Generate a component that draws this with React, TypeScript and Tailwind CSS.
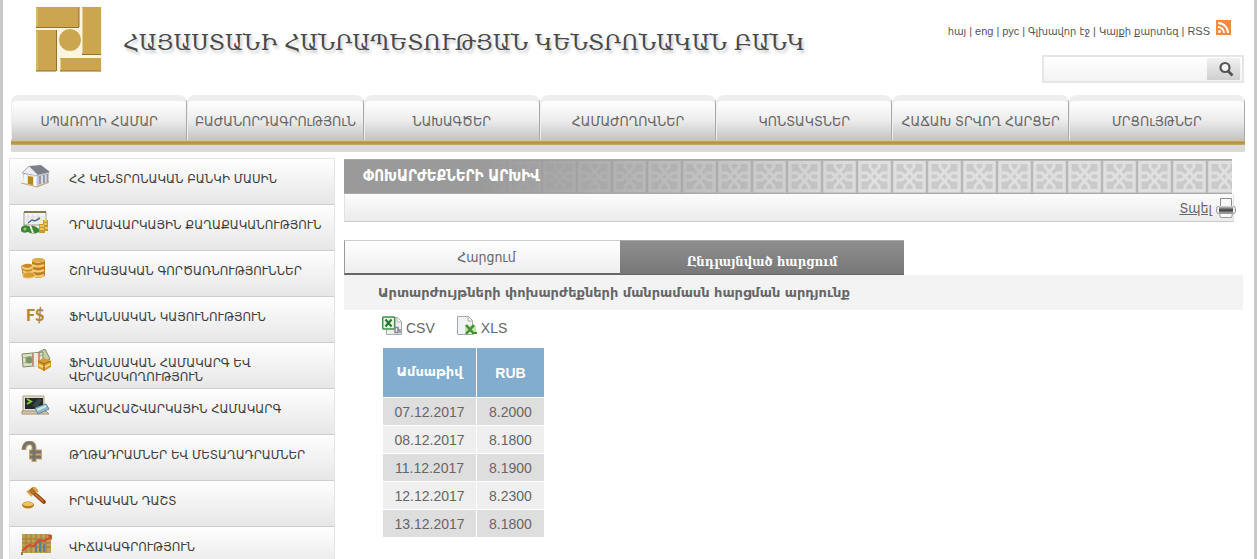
import { FC, ReactNode } from "react";

interface MenuItem {
  label: string;
  icon: ReactNode;
}

const navLinks = [
  "ՍՊԱՌՈՂԻ ՀԱՄԱՐ",
  "ԲԱԺԱՆՈՐԴԱԳՐՈւԹՅՈւՆ",
  "ՆԱԽԱԳԾԵՐ",
  "ՀԱՄԱԺՈՂՈՎՆԵՐ",
  "ԿՈՆՏԱԿՏՆԵՐ",
  "ՀԱՃԱԽ ՏՐՎՈՂ ՀԱՐՑԵՐ",
  "ՄՐՑՈւՅԹՆԵՐ",
];

const topLinks = ["հայ", "eng", "рус", "Գլխավոր էջ", "Կայքի քարտեզ", "RSS"];

const rates = [
  { date: "07.12.2017", value: "8.2000" },
  { date: "08.12.2017", value: "8.1800" },
  { date: "11.12.2017", value: "8.1900" },
  { date: "12.12.2017", value: "8.2300" },
  { date: "13.12.2017", value: "8.1800" },
];

const Logo = () => (
  <svg width="66" height="65" viewBox="0 0 66 65" className="shrink-0">
    <rect width="66" height="65" fill="#fbf4df" />
    <path d="M1 0h42v20H0V0zM46 0h19v47H46zM0 23h20v41H0zM24 51h41v13H24z" fill="#cba64f" />
    <path d="M0 20.500h43M46 47.500h19M24 64h41M0 64h20M20.500 23v41M43 0v20" stroke="#97712a" fill="none" />
    <path d="M1 1v18M1 24v39M46.500 1v45M24.500 52v11" stroke="#e6cc8a" fill="none" />
    <circle cx="34" cy="33" r="11.500" fill="#cba64f" stroke="#fffaf0" />
  </svg>
);

const RssIcon = () => (
  <svg width="15" height="15" viewBox="0 0 15 15">
    <rect width="15" height="15" fill="#f08a3c" />
    <circle cx="3.500" cy="11.500" r="1.500" fill="#fff" />
    <path d="M2 7a6 6 0 0 1 6 6M2 3a10 10 0 0 1 10 10" fill="none" stroke="#fff" strokeWidth="1.800" />
  </svg>
);

const SearchIcon = () => (
  <svg width="16" height="16" viewBox="0 0 16 16">
    <circle cx="7" cy="6.500" r="4.500" fill="#f4f4f4" stroke="#555" strokeWidth="2.200" />
    <path d="M10 10l4.500 4.500" stroke="#555" strokeWidth="2.800" />
  </svg>
);

const BankIcon = () => (
  <svg width="32" height="24" viewBox="0 0 32 24">
    <path d="M2 9l6-7 12-1 8 6v11l-12 4-13-4z" fill="#c3c6cd" />
    <path d="M8 1l12-1 9 7-13 3z" fill="#7c8088" />
    <path d="M1 8l7-7 9 9-1 1z" fill="#eceef1" stroke="#a4a8b0" />
    <path d="M3 9l13 2v10L3 18z" fill="#dfe2e8" />
    <path d="M4.500 10v8M14 12v9" stroke="#fff" strokeWidth="2" />
    <path d="M7 11l5 1v8l-5-1z" fill="#b88422" />
    <path d="M19 11v8M23 10v8M26 9v8" stroke="#858c9b" strokeWidth="1.500" />
    <path d="M21 11v8M25 10v7" stroke="#eceef1" />
    <path d="M0 18l16 4 12-5" fill="none" stroke="#cda871" />
  </svg>
);

const BoardIcon = () => (
  <svg width="32" height="24" viewBox="0 0 32 24">
    <path d="M3 1h22v13H3z" fill="#f3f4f2" stroke="#9b9a8c" />
    <path d="M3 1h22" stroke="#807c54" strokeWidth="2" />
    <path d="M7 3v10M12 3v10M17 3v10M3 6h22M3 9h22" stroke="#d9dedb" />
    <path d="M7 12l4-3 3 1 5-3" fill="none" stroke="#4e6d93" strokeWidth="1.500" />
    <path d="M0 17q2-4 7-2 6-2 11 3v3q-6 3-11 0-5 2-7-1z" fill="#3c8735" />
    <circle cx="4" cy="18" r="1.500" fill="#95c974" />
    <path d="M9 14l3 8" stroke="#e8ecd6" strokeWidth="2" />
    <path d="M18 13h6v9h-6zM22 9h5v11h-5z" fill="#c79a2b" />
    <path d="M19 15h4M19 18h4M23 10h3M23 13h3M24 17h3" stroke="#f2d66c" strokeWidth="1.500" />
  </svg>
);

const CoinsIcon = () => (
  <svg width="32" height="24" viewBox="0 0 32 24">
    <path d="M11 3q7-4 13 0v16q-7 4-13 0z" fill="#bd7f25" />
    <path d="M0 9q6-4 12-1v11q-6 4-10 1z" fill="#c78a2a" />
    <path d="M11 3q6 4 13 0M11 8q6 3 12 0M11 13q6 3 12 0M11 18q6 3 12 0M1 10q5 4 11 0M2 14q5 4 10 0" stroke="#f3cf72" fill="none" strokeWidth="2" />
    <ellipse cx="17.500" cy="3" rx="6" ry="2" fill="#dfac49" />
    <ellipse cx="8" cy="18" rx="6" ry="3" fill="#d89c36" stroke="#ebc76b" />
  </svg>
);

const StabilityIcon = () => (
  <svg width="32" height="24" viewBox="0 0 32 24">
    <text x="5" y="18" className="font-['Lato'] text-[16px] font-black" fill="#b58735">
      F$
    </text>
  </svg>
);

const CashIcon = () => (
  <svg width="32" height="24" viewBox="0 0 32 24">
    <path d="M12 6l12-6 5 10-12 6z" fill="#c4cfaa" stroke="#7b8964" />
    <path d="M1 5l21-2v13L2 18z" fill="#dce0c4" stroke="#7d8c66" />
    <path d="M1 9l21-3M2 14l20-2" stroke="#a3ad85" />
    <circle cx="8" cy="11" r="3.500" fill="#7f956d" />
    <path d="M12 4h6v13h-6z" fill="#eee9df" />
    <path d="M12 4v13M18 4v13" stroke="#c87464" strokeWidth="1.500" />
    <path d="M17 12l6-3 7 3v6l-7 4-6-3z" fill="#d59c2e" />
    <path d="M17 12l6 3 7-3M23 15v7" stroke="#9c6519" fill="none" />
    <path d="M18 16l4 2M24 18l5-3" stroke="#f6d77b" strokeWidth="2" />
  </svg>
);

const TerminalIcon = () => (
  <svg width="32" height="24" viewBox="0 0 32 24">
    <path d="M2 1h21v16H2z" fill="#e4ded0" stroke="#b69e75" />
    <path d="M4 3h18v11H4z" fill="#222b2c" />
    <path d="M6 4l4 2.500L6 9" fill="none" stroke="#8dc63f" strokeWidth="2" />
    <path d="M11 11l6-7 4 1-4 7z" fill="#3c474a" />
    <path d="M1 16h24l3 3H1z" fill="#cfc8b8" stroke="#a98e68" />
    <path d="M14 13l11-4 3 5-11 5z" fill="#91b9cf" stroke="#5686a5" />
    <path d="M16 15l9-4" stroke="#d3e9d0" strokeWidth="2" />
  </svg>
);

const DramIcon = () => (
  <svg width="32" height="24" viewBox="0 0 32 24">
    <path d="M3 9C3 0 13 0 13 6v15M8 11h13M8 16h13" fill="none" stroke="#c5a66d" strokeWidth="5" />
    <path d="M2.500 8.500C3 0 13 0 13 6v14M9 11h11M9 16h11" fill="none" stroke="#77736b" strokeWidth="3" />
  </svg>
);

const GavelIcon = () => (
  <svg width="32" height="24" viewBox="0 0 32 24">
    <path d="M14 7l9 8" stroke="#9c4c17" strokeWidth="4" strokeLinecap="round" />
    <path d="M14 7l8 7" stroke="#d27a2e" strokeWidth="1.500" />
    <path d="M8 7l7-6" stroke="#b37127" strokeWidth="6" />
    <path d="M6 4l5 5M12 0l5 5" stroke="#e2aa51" strokeWidth="2" />
    <ellipse cx="7" cy="18" rx="6" ry="3.500" fill="#b67d21" />
    <ellipse cx="7" cy="17" rx="5" ry="2" fill="#f0c164" />
  </svg>
);

const StatsIcon = () => (
  <svg width="32" height="24" viewBox="0 0 32 24">
    <path d="M1 1h29v19H1z" fill="#c2a053" />
    <path d="M1 6h29M1 10h29M1 14h29M5 1v19M10 1v19M15 1v19M20 1v19M25 1v19" stroke="#9c7b3b" />
    <path d="M15 10v9M19 7v12M23 11v8" stroke="#5580a0" strokeWidth="2" />
    <path d="M1 18l7-6 5 1 5-6 5 1 7-4" fill="none" stroke="#d54b32" strokeWidth="2" />
    <path d="M26 2h5v5z" fill="#d54b32" />
    <path d="M1 19v3" stroke="#9c7b3b" strokeWidth="2" />
  </svg>
);

const PrinterIcon = () => (
  <svg width="20" height="20" viewBox="0 0 20 20">
    <defs>
      <linearGradient id="printer" x1="0" x2="0" y1="0" y2="1">
        <stop offset="0" stopColor="#e0e0e0" />
        <stop offset="0.600" stopColor="#3c3c3c" />
        <stop offset="1" stopColor="#a8a8a8" />
      </linearGradient>
    </defs>
    <path d="M4.500.500h11v10h-11z" fill="#f8f8f8" stroke="#8e8e8e" />
    <rect x=".500" y="8.500" width="19" height="7" rx="2" fill="#ededed" stroke="#999" />
    <rect x="3" y="8" width="14" height="7" fill="url(#printer)" />
    <path d="M3.500 15.500h13l-1 4h-11z" fill="#fafafa" stroke="#9a9a9a" />
  </svg>
);

const CsvIcon = () => (
  <svg width="20" height="20" viewBox="0 0 20 20">
    <path d="M4.500 1.500h11l4 4v13h-15z" fill="#eef0ef" stroke="#a5a8a5" />
    <path d="M15 1v5h4" fill="#fff" stroke="#b0b0b0" />
    <rect x=".700" y="1" width="12" height="12" rx="1" fill="#e3f3df" stroke="#41904a" strokeWidth="1.500" />
    <path d="M3.500 3.500l6 7M9.500 3.500l-6 7" stroke="#237430" strokeWidth="2" />
    <path d="M13 11.500h3v5h-3zM16 14h2v3" fill="none" stroke="#828993" strokeWidth="1.500" />
  </svg>
);

const XlsIcon = () => (
  <svg width="20" height="20" viewBox="0 0 20 20">
    <path d="M.500.500h11l4 4v14H.500z" fill="#f1f2f3" stroke="#a6a8aa" />
    <path d="M11 1v4h4" fill="#fff" stroke="#aaa" />
    <path d="M8 9.500h11v7H8z" fill="#c3e5aa" />
    <path d="M9 9l8 9M17 9l-8 9" stroke="#3f9133" strokeWidth="2.600" />
    <path d="M15 16h5v2h-5z" fill="#3f9133" />
  </svg>
);

const Ornament = () => (
  <svg className="absolute inset-0 h-full w-full" aria-hidden="true">
    <defs>
      <pattern id="knot" x="23" width="35" height="35" patternUnits="userSpaceOnUse">
        <rect width="35" height="35" fill="#cacaca" />
        <path d="M0 0v35M35 0v35M0 .500h35M0 34.500h35" stroke="#b8b8b8" strokeWidth="2" />
        <rect x="3" y="2.500" width="29" height="28" fill="none" stroke="#e0e0e0" strokeWidth="3" />
        <g fill="none" stroke="#e0e0e0" strokeWidth="3">
          <path d="M13 3v4l12 13h7" />
          <path d="M3 13h7l12 13v5" />
          <path d="M22 3v4L10 20H3" />
          <path d="M32 13h-7L13 26v5" />
        </g>
      </pattern>
    </defs>
    <rect width="100%" height="100%" fill="url(#knot)" />
  </svg>
);

const menu: MenuItem[] = [
  { label: "ՀՀ ԿԵՆՏՐՈՆԱԿԱՆ ԲԱՆԿԻ ՄԱՍԻՆ", icon: <BankIcon /> },
  { label: "ԴՐԱՄԱՎԱՐԿԱՅԻՆ ՔԱՂԱՔԱԿԱՆՈՒԹՅՈՒՆ", icon: <BoardIcon /> },
  { label: "ՇՈՒԿԱՅԱԿԱՆ ԳՈՐԾԱՌՆՈՒԹՅՈՒՆՆԵՐ", icon: <CoinsIcon /> },
  { label: "ՖԻՆԱՆՍԱԿԱՆ ԿԱՅՈՒՆՈՒԹՅՈՒՆ", icon: <StabilityIcon /> },
  { label: "ՖԻՆԱՆՍԱԿԱՆ ՀԱՄԱԿԱՐԳ ԵՎ ՎԵՐԱՀՍԿՈՂՈՒԹՅՈՒՆ", icon: <CashIcon /> },
  { label: "ՎՃԱՐԱՀԱՇՎԱՐԿԱՅԻՆ ՀԱՄԱԿԱՐԳ", icon: <TerminalIcon /> },
  { label: "ԹՂԹԱԴՐԱՄՆԵՐ ԵՎ ՄԵՏԱՂԱԴՐԱՄՆԵՐ", icon: <DramIcon /> },
  { label: "ԻՐԱՎԱԿԱՆ ԴԱՇՏ", icon: <GavelIcon /> },
  { label: "ՎԻՃԱԿԱԳՐՈՒԹՅՈՒՆ", icon: <StatsIcon /> },
];

const Header = () => (
  <header className="flex h-[95px] justify-between pl-[25px]">
    <div className="flex items-start gap-[21px] pt-[7px]">
      <Logo />
      <h1 className="pt-5 font-['DejaVu_Serif',serif] text-[22px] leading-[32px] whitespace-nowrap text-[#4a4a4a] [text-shadow:2px_3px_3px_#ccc]">
        ՀԱՅԱՍՏԱՆԻ ՀԱՆՐԱՊԵՏՈՒԹՅԱՆ ԿԵՆՏՐՈՆԱԿԱՆ ԲԱՆԿ
      </h1>
    </div>
    <div className="flex flex-col items-end pt-5">
      <div className="flex items-start gap-1.5 pr-3.5">
        <div className="flex gap-[3px] pt-1 font-['Liberation_Sans','DejaVu_Sans_Condensed',sans-serif] text-[11px] leading-[14px] whitespace-nowrap text-[#555]">
          {topLinks.map((link, index) => (
            <span key={link} className="flex gap-[3px]">
              {index > 0 && <span>|</span>}
              <a href="#">{link}</a>
            </span>
          ))}
        </div>
        <RssIcon />
      </div>
      <form className="mt-[17px] mr-px flex h-7 w-[202px] border-2 border-[#e6e6e6] bg-linear-to-b from-white to-[#f3f3f3]">
        <input aria-label="Որոնում" type="text" className="min-w-0 flex-1 px-1 text-xs outline-none" />
        <button
          type="button"
          aria-label="Որոնել"
          className="m-px mr-0.5 flex w-[33px] items-center justify-center bg-linear-to-b from-[#f1f1f1] to-[#cfcfcf] pl-1"
        >
          <SearchIcon />
        </button>
      </form>
    </div>
  </header>
);

const Nav = () => (
  <nav className="border-b-[7px] border-[#dadada]">
    <div className="grid grid-cols-7">
      {navLinks.map((link) => (
        <a
          key={link}
          href="#"
          className="flex h-[45px] items-center justify-center rounded-t-lg border-t-[6px] border-r border-l border-t-[#eee] border-r-[#a9a9a9] border-l-[#eee] bg-linear-to-b from-white via-[#ececec] to-[#c4c4c4] font-['DejaVu_Sans_Condensed','DejaVu_Sans',sans-serif] text-sm whitespace-nowrap text-[#666]"
        >
          {link}
        </a>
      ))}
    </div>
    <div className="h-[5px] bg-linear-to-b from-[#e3cf98] via-[#b08d45] to-[#c9ab69]" />
  </nav>
);

const SideMenu = () => (
  <aside className="w-[326px] shrink-0 border-x border-t border-[#e4e4e4]">
    <ul>
      {menu.map(({ label, icon }) => (
        <li key={label}>
          <a
            href="#"
            className="flex h-[46px] items-start gap-4 border-b border-[#cdcdcd] bg-linear-to-b from-[#fefefe] to-[#e7e7e7] pl-[11px]"
          >
            <span className="shrink-0 pt-1.5">{icon}</span>
            <span className="pt-[13px] font-['DejaVu_Sans_Condensed','DejaVu_Sans',sans-serif] text-[13px] leading-[14px] text-[#3d3d3d]">
              {label}
            </span>
          </a>
        </li>
      ))}
    </ul>
  </aside>
);

const Banner = () => (
  <div className="mr-[9px]">
    <div className="relative mr-0.5 h-[35px] border-y border-[#aaa]">
      <Ornament />
      <div className="absolute inset-0 bg-linear-to-r from-[#9a9a9a] from-15% to-transparent to-60%" />
      <h2 className="relative pl-[19px] font-['DejaVu_Sans_Condensed','DejaVu_Sans',sans-serif] text-[15px] leading-[33px] font-bold text-white">
        ՓՈԽԱՐԺԵՔՆԵՐԻ ԱՐԽԻՎ
      </h2>
    </div>
    <div className="flex h-7 justify-end border border-t-0 border-b-[#c9c9c9] border-[#e2e2e2] bg-linear-to-b from-[#fcfcfc] to-[#ebebeb]">
      <a
        href="#"
        className="-mr-[3px] flex items-center gap-1 font-['DejaVu_Sans_Condensed','DejaVu_Sans',sans-serif] text-sm text-[#666] underline"
      >
        Տպել
        <PrinterIcon />
      </a>
    </div>
  </div>
);

const Tabs = () => (
  <div className="mt-[18px] flex h-[35px] w-[560px]">
    <a
      href="#"
      className="flex-1 border-t border-b-2 border-l border-t-[#ccc] border-b-[#666] border-l-[#999] bg-linear-to-b from-white to-[#eee] pl-2 text-center font-['DejaVu_Sans_Condensed','DejaVu_Sans',sans-serif] text-sm leading-[32px] text-[#666]"
    >
      Հարցում
    </a>
    <a
      href="#"
      className="w-[284px] border-t border-b border-t-[#aaa] border-b-[#666] bg-linear-to-b from-[#8e8e8e] to-[#787878] pt-[5px] text-center font-['DejaVu_Serif_Condensed','DejaVu_Serif',serif] text-[13px] leading-[32px] font-bold text-white"
    >
      Ընդլայնված հարցում
    </a>
  </div>
);

const Export: FC<{ label: string; icon: ReactNode }> = ({ label, icon }) => (
  <a href="#" className="flex items-end gap-1 text-sm leading-4">
    {icon}
    {label}
  </a>
);

const RatesTable = () => (
  <table className="mt-[11px] ml-[38px] border-separate border-spacing-px text-center text-sm">
    <thead>
      <tr className="h-[49px] bg-[#82adce] text-white">
        <th className="w-[93px] font-['DejaVu_Sans',sans-serif] text-[13px]">Ամսաթիվ</th>
        <th className="w-[67px]">RUB</th>
      </tr>
    </thead>
    <tbody>
      {rates.map(({ date, value }) => (
        <tr key={date} className="h-[27px] odd:bg-[#dedede] even:bg-[#efefef]">
          <td>{date}</td>
          <td>{value}</td>
        </tr>
      ))}
    </tbody>
  </table>
);

export default function App() {
  return (
    <div className="h-screen overflow-hidden border-x-[3px] border-[#c9c9c9] bg-white pr-[9px] pl-2 font-['Liberation_Sans','DejaVu_Sans_Condensed',sans-serif] text-[#666]">
      <Header />
      <Nav />
      <div className="-ml-0.5 flex gap-[9px] pt-1.5">
        <SideMenu />
        <main className="min-w-0 flex-1 pt-px pr-0.5">
          <Banner />
          <Tabs />
          <h3 className="bg-[#f3f3f3] pl-[34px] font-['DejaVu_Sans',sans-serif] text-[13px] leading-[35px] font-bold">
            Արտարժույթների փոխարժեքների մանրամասն հարցման արդյունք
          </h3>
          <div className="flex gap-[22px] pt-1.5 pl-[38px]">
            <Export label="CSV" icon={<CsvIcon />} />
            <Export label="XLS" icon={<XlsIcon />} />
          </div>
          <RatesTable />
        </main>
      </div>
    </div>
  );
}
